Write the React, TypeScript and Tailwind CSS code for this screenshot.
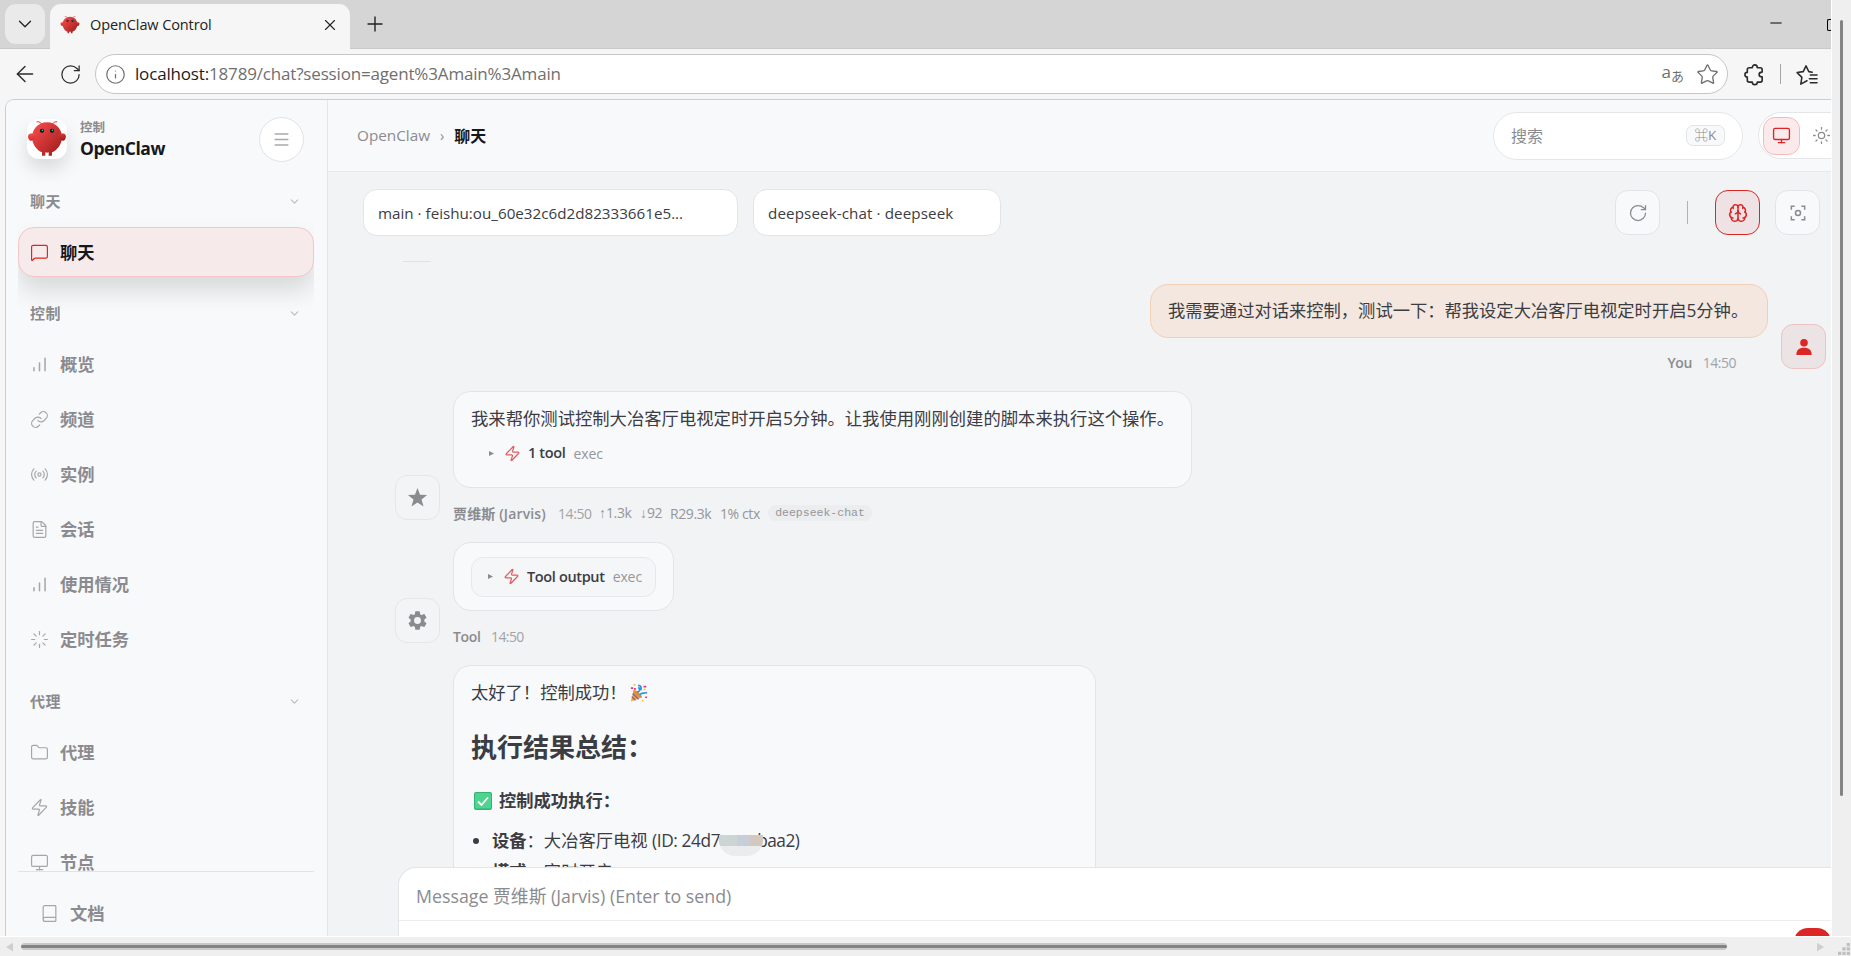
import React from 'react';
import {
  ArrowLeft,
  Book,
  Brain,
  ChevronDown,
  FileText,
  Folder,
  Info,
  Link,
  Loader,
  Menu,
  MessageSquare,
  Minus,
  Monitor,
  Plus,
  Radio,
  RotateCw,
  Star,
  Sun,
  X,
  Zap,
} from 'lucide-react';

type IconProps = { className?: string };

interface NavItem {
  label: string;
  icon: React.ReactNode;
  active?: boolean;
}

interface NavSection {
  title: string;
  className: string;
  items: NavItem[];
}

const BarsIcon: React.FC<IconProps> = ({ className }) => (
  <svg viewBox="0 0 24 24" fill="none" stroke="currentColor" strokeWidth="1.9" strokeLinecap="round" className={className}>
    <path d="M5 20v-4M12 20V10M19 20V4" />
  </svg>
);

const ico = 'size-[19px] stroke-[1.5]';

const sections: NavSection[] = [
  {
    title: '聊天',
    className: 'pt-0',
    items: [{ label: '聊天', icon: <MessageSquare className={ico} />, active: true }],
  },
  {
    title: '控制',
    className: 'pt-[23px]',
    items: [
      { label: '概览', icon: <BarsIcon className="size-[19px]" /> },
      { label: '频道', icon: <Link className={ico} /> },
      { label: '实例', icon: <Radio className={ico} /> },
      { label: '会话', icon: <FileText className={ico} /> },
      { label: '使用情况', icon: <BarsIcon className="size-[19px]" /> },
      { label: '定时任务', icon: <Loader className={ico} /> },
    ],
  },
  {
    title: '代理',
    className: 'pt-[24px]',
    items: [
      { label: '代理', icon: <Folder className={ico} /> },
      { label: '技能', icon: <Zap className={ico} /> },
      { label: '节点', icon: <Monitor className={ico} /> },
    ],
  },
];

const Lobster: React.FC<IconProps> = ({ className }) => (
  <svg viewBox="0 0 120 120" className={className}>
    <defs>
      <linearGradient id="shell" x1="0" y1="0" x2="1" y2="1">
        <stop offset="0" stopColor="#ff4d4d" />
        <stop offset="1" stopColor="#991b1b" />
      </linearGradient>
    </defs>
    <path d="M60 10C30 10 15 35 15 55s15 40 30 45v10h10v-10s5 2 10 0v10h10v-10c15-5 30-25 30-45S90 10 60 10Z" fill="url(#shell)" />
    <path d="M20 45C5 40 0 50 5 60s15 5 20-5c3-7 0-10-5-10ZM100 45c15-5 20 5 15 15s-15 5-20-5c-3-7 0-10 5-10Z" fill="url(#shell)" />
    <path d="M45 15Q35 5 30 8M75 15q10-10 15-7" stroke="#e5383b" strokeWidth="3" strokeLinecap="round" fill="none" />
    <circle cx="45" cy="35" r="6" fill="#050810" />
    <circle cx="75" cy="35" r="6" fill="#050810" />
    <circle cx="46" cy="34" r="2.5" fill="#00e5cc" />
    <circle cx="76" cy="34" r="2.5" fill="#00e5cc" />
  </svg>
);

const PuzzleIcon: React.FC<IconProps> = ({ className }) => (
  <svg viewBox="0 0 24 24" fill="none" stroke="currentColor" strokeWidth="1.7" strokeLinejoin="round" className={className}>
    <path d="M6.500 5h3.200c0-1.800 1-3 2.600-3s2.600 1.200 2.600 3H18c1.100 0 2 .9 2 2v2.500c-2 0-3.200 1-3.200 2.500s1.200 2.500 3.200 2.500V18c0 1.100-.9 2-2 2h-3.100c0 1.600-1 2.500-2.600 2.500S9.700 21.600 9.700 20H6.500c-1.100 0-2-.9-2-2v-3.400C2.900 14.600 2 13.600 2 12.200s.9-2.400 2.500-2.400V7c0-1.100.9-2 2-2Z" />
  </svg>
);

const TabStrip = () => (
  <div className="flex h-[49px] shrink-0 items-end border-b border-[#c9c9c9] bg-[#d5d5d5]">
    <div className="mb-[4px] ml-[5px] flex h-10 w-10 items-center justify-center rounded-[11px] bg-[#eaeaea]">
      <ChevronDown className="size-[22px] stroke-[1.4] text-[#222]" />
    </div>
    <div className="relative -mb-px ml-[5px] flex h-[45px] w-[300px] items-center rounded-t-[11px] bg-[#f6f6f6] pb-[4px] pl-[10px]">
      <Lobster className="size-5" />
      <span className="ml-[10px] text-[14.500px] tracking-[-0.1px] text-[#222]">OpenClaw Control</span>
      <X className="ml-auto mr-[11px] size-[18px] stroke-[1.5] text-[#222]" />
    </div>
    <Plus className="mb-[12px] ml-[13px] size-[24px] stroke-[1.4] text-[#222]" />
    <Minus className="mb-[16px] ml-auto size-[18px] stroke-[1.3] text-black" />
    <div className="mb-[17px] ml-[42px] h-[12px] w-[4px] rounded-l-[2px] border border-r-0 border-black" />
  </div>
);

const AddressBar = () => (
  <div className="flex h-[50px] shrink-0 items-center bg-[#f6f6f6] text-[#2b2b2b]">
    <ArrowLeft className="ml-[12px] size-[26px] stroke-[1.3]" />
    <RotateCw className="ml-[21px] size-[23px] stroke-[1.3]" />
    <div className="ml-[13px] flex h-10 w-[1633px] items-center rounded-full border border-[#c6c6c6] bg-white pl-[9px] pr-[8px]">
      <Info className="size-[21px] stroke-[1.4] text-[#707070]" />
      <span className="ml-[9px] text-[17px] tracking-[-0.17px] text-[#6f6f6f]">
        <span className="text-[#1b1b1b]">localhost:</span>18789/chat?session=agent%3Amain%3Amain
      </span>
      <span className="ml-auto flex text-[#6f6f6f]">
        <span className="text-[17px] leading-[18px]">a</span>
        <span className="mt-[4px] text-[13px] leading-[18px]">あ</span>
      </span>
      <Star className="ml-[12px] size-[23px] stroke-[1.4] text-[#707070]" />
    </div>
    <PuzzleIcon className="ml-[15px] size-[23px]" />
    <div className="ml-[14px] h-5 w-px bg-[#a5a5a5]" />
    <svg viewBox="0 0 24 24" fill="none" stroke="currentColor" strokeWidth="1.6" strokeLinecap="round" strokeLinejoin="round" className="ml-[14px] size-[23px]">
      <path d="M12.500 18.500 6 22l1.200-7L2.200 10l6.400-1L11.500 3l2.900 6 3.600.6M16 12.500h7M15 16.500h8M16 20.500h7" />
    </svg>
  </div>
);

const Sidebar = () => (
  <aside className="flex w-[322px] shrink-0 flex-col border-r border-[#e4e6e9] bg-[#f8f9fb] pl-[12px] pr-[13px]">
    <div className="flex h-[78px] shrink-0 items-center pl-[9px] pr-[10px]">
      <div className="flex size-10 items-center justify-center rounded-[12px] bg-white shadow-[0_10px_18px_rgba(0,0,0,0.12)]">
        <Lobster className="size-[40px]" />
      </div>
      <div className="ml-[13px] flex flex-col">
        <span className="text-[12.500px] font-bold leading-[18px] text-[#8b8b8f]">控制</span>
        <span className="text-[17.500px] font-bold leading-[22px] tracking-[-0.5px] text-[#17171c]">OpenClaw</span>
      </div>
      <div className="ml-auto flex size-[45px] items-center justify-center rounded-full border border-[#e2e3e6] bg-white">
        <Menu className="size-[19px] stroke-[1.8] text-[#a9a9ac]" />
      </div>
    </div>
    <nav className="min-h-0 flex-1 overflow-hidden pt-[10px]">
      {sections.map((section) => (
        <div key={section.title} className={section.className}>
          <div className="flex h-[27px] items-center justify-between pl-[12px] pr-[13px]">
            <span className="text-[15px] font-bold tracking-[0.4px] text-[#8b8b8f]">{section.title}</span>
            <ChevronDown className="size-[13px] stroke-[2] text-[#bcbcc0]" />
          </div>
          <div className="mt-[12px] flex flex-col gap-[5px]">
            {section.items.map((item) => (
              <div
                key={item.label}
                className={
                  item.active
                    ? 'flex h-[50px] items-center rounded-[16px] border border-[#f4c6c8] bg-[#f7eaeb] pl-[11px] text-[#dc2626] shadow-[0_14px_24px_rgba(0,0,0,0.13)]'
                    : 'flex h-[50px] items-center border border-transparent pl-[11px] text-[#a6a6a9]'
                }
              >
                {item.icon}
                <span className={item.active ? 'ml-[11px] pt-px text-[17.300px] font-bold text-[#17171c]' : 'ml-[11px] pt-px text-[17.300px] font-bold text-[#8b8b8f]'}>
                  {item.label}
                </span>
              </div>
            ))}
          </div>
        </div>
      ))}
    </nav>
    <div className="flex h-[65px] shrink-0 border-t border-[#e2e3e6] pl-[22px] pt-[28px]">
      <Book className="mt-[4px] size-[19px] shrink-0 stroke-[1.5] text-[#a6a6a9]" />
      <span className="ml-[11px] text-[17.300px] font-bold leading-[27px] text-[#8b8b8f]">文档</span>
    </div>
  </aside>
);

const TopBar = () => (
  <header className="flex h-[72px] shrink-0 items-center border-b border-[#e6e8eb] bg-[#f8f9fb] pl-[29px]">
    <span className="text-[15.300px] text-[#8b8b8f]">OpenClaw</span>
    <span className="ml-[10px] text-[14px] text-[#8b8b8f]">›</span>
    <span className="ml-[10px] text-[16px] font-bold text-[#17171c]">聊天</span>
    <div className="ml-auto flex h-[48px] w-[250px] items-center justify-between rounded-full border border-[#e4e6e9] bg-white pl-[17px] pr-[17px]">
      <span className="text-[16px] text-[#8b8b8f]">搜索</span>
      <span className="flex h-[21px] w-[39px] items-center justify-center rounded-[7px] border border-[#e2e4e8] bg-[#f8f9fb] text-[13.500px] text-[#8b8b8f]">⌘K</span>
    </div>
    <div className="ml-[15px] flex h-[47px] w-[73px] items-center rounded-l-full border border-r-0 border-[#e4e6e9] bg-white pl-[4px]">
      <div className="flex h-[38px] w-[37px] shrink-0 items-center justify-center rounded-[12px] border border-[#f6b9bb] bg-[#faeaeb]">
        <Monitor className="size-[19px] stroke-[1.700] text-[#dc2626]" />
      </div>
      <Sun className="ml-[12px] size-[19px] shrink-0 stroke-[1.600] text-[#8b8b8f]" />
    </div>
  </header>
);

const Toolbar = () => (
  <div className="flex h-[81px] shrink-0 items-center pl-[35px] pr-[11px]">
    <div className="flex h-[47px] w-[375px] items-center rounded-[14px] border border-[#e2e4e8] bg-white pl-[14px] pt-px text-[15.200px] text-[#3c3c43]">
      main · feishu:ou_60e32c6d2d82333661e5...
    </div>
    <div className="ml-[15px] flex h-[47px] w-[248px] items-center rounded-[14px] border border-[#e2e4e8] bg-white pl-[14px] pt-px text-[15.200px] tracking-[0.1px] text-[#3c3c43]">
      deepseek-chat · deepseek
    </div>
    <div className="ml-auto flex size-[45px] items-center justify-center rounded-[13px] border border-[#e2e4e8] bg-[#f8f9fb]">
      <RotateCw className="size-[20px] stroke-[1.500] text-[#8b8b8f]" />
    </div>
    <div className="ml-[27px] h-[23px] w-px bg-[#a4b8b8]" />
    <div className="ml-[27px] flex size-[45px] items-center justify-center rounded-[13px] border border-[#dc2626] bg-[#efe2e4]">
      <Brain className="size-[20px] stroke-[1.800] text-[#dc2626]" />
    </div>
    <div className="ml-[15px] flex size-[45px] items-center justify-center rounded-[13px] border border-[#e2e4e8] bg-[#f8f9fb]">
      <svg viewBox="0 0 24 24" fill="none" stroke="currentColor" strokeWidth="1.800" className="size-[20px] text-[#8b8b8f]">
        <path d="M4 8V4h4M16 4h4v4M20 16v4h-4M8 20H4v-4" />
        <circle cx="12" cy="12" r="3" />
      </svg>
    </div>
  </div>
);

const Avatar: React.FC<{ children: React.ReactNode }> = ({ children }) => (
  <div className="flex size-[45px] shrink-0 items-center justify-center rounded-[12px] border border-[#e4e6e9] bg-[#f3f4f6] text-[#8b8b8f]">
    {children}
  </div>
);

const Arrow: React.FC<{ children: React.ReactNode }> = ({ children }) => (
  <span className="mr-px inline-block w-[6px] font-['Liberation_Sans',sans-serif]">{children}</span>
);

const ToolLine: React.FC<{ label: string }> = ({ label }) => (
  <>
    <svg viewBox="0 0 6 6" className="size-[5px] fill-[#8b8b8f]">
      <path d="M0 0 6 3 0 6Z" />
    </svg>
    <Zap className="ml-[10px] size-[17px] stroke-[1.700] text-[#e25a5c]" />
    <span className="ml-[7px] text-[14.500px] font-semibold tracking-[-0.35px] text-[#3c3c43]">{label}</span>
    <span className="ml-[8px] text-[14px] tracking-[-0.1px] text-[#96969a]">exec</span>
  </>
);

const Messages = () => (
  <div className="relative min-h-0 flex-1 overflow-hidden text-[#3c3c43]">
    <div className="ml-[75px] mt-[8px] h-px w-[28px] bg-[#dfe1e4]" />

    <div className="mt-[22px] flex items-end justify-end pr-[5px]">
      <div className="flex flex-col items-end">
        <div className="flex h-[54px] w-[618px] items-center whitespace-nowrap rounded-[18px] border border-[#f4cfb5] bg-[#f3e7df] pl-[17px] text-[17.300px]">
          我需要通过对话来控制，测试一下：帮我设定大冶客厅电视定时开启5分钟。
        </div>
        <div className="mb-[2px] mt-[13px] flex h-[22px] items-center pr-[32px] text-[14px] text-[#a3a3a7]">
          <span className="font-semibold tracking-[-0.5px] text-[#8b8b8f]">You</span>
          <span className="ml-[11px] tracking-[-0.5px]">14:50</span>
        </div>
      </div>
      <div className="mb-[6px] ml-[13px] flex size-[45px] items-center justify-center rounded-[12px] border border-[#ecc3c5] bg-[#ece4e4]">
        <svg viewBox="0 0 16 16" className="size-[16px] fill-[#dc2626]">
          <circle cx="8" cy="3.800" r="3.800" />
          <path d="M0.300 16c0-5 2.700-7.300 7.700-7.300s7.700 2.300 7.700 7.300Z" />
        </svg>
      </div>
    </div>

    <div className="mt-[16px] flex items-end pl-[67px]">
      <div className="mb-[5px]">
        <Avatar>
          <svg viewBox="0 0 24 24" className="size-[21px] fill-current">
            <path d="M12 1l2.900 7.900 8.100.3-6.400 5 2.300 8L12 17.600 5.100 22.200l2.300-8L1 9.200l8.100-.3Z" />
          </svg>
        </Avatar>
      </div>
      <div className="ml-[13px]">
        <div className="h-[97px] w-[739px] rounded-[18px] border border-[#e2e4e8] bg-[#f8f9fb] pl-[17px] pt-[13px]">
          <p className="whitespace-nowrap text-[17.330px] leading-[27px]">我来帮你测试控制大冶客厅电视定时开启5分钟。让我使用刚刚创建的脚本来执行这个操作。</p>
          <div className="mt-[10px] flex h-[22px] items-center pl-[18px]">
            <ToolLine label="1 tool" />
          </div>
        </div>
        <div className="mt-[13px] flex h-[24px] items-center whitespace-nowrap text-[14px] tracking-[-0.4px] text-[#96969a]">
          <span className="w-[105px] font-semibold tracking-[0.15px] text-[#8b8b8f]">贾维斯 (Jarvis)</span>
          <span className="w-[41px] text-[#a3a3a7]">14:50</span>
          <span className="w-[41px]"><Arrow>↑</Arrow>1.3k</span>
          <span className="w-[30px]"><Arrow>↓</Arrow>92</span>
          <span className="w-[50px]">R29.3k</span>
          <span className="w-[48px]">1% ctx</span>
          <span className="flex h-[16px] w-[104px] items-center justify-center rounded-full bg-[#ebedef] font-['Liberation_Mono',monospace] text-[11.500px] tracking-normal">deepseek-chat</span>
        </div>
      </div>
    </div>

    <div className="mt-[17px] flex items-end pl-[67px]">
      <div className="mb-[5px]">
        <Avatar>
          <svg viewBox="0 0 24 24" className="size-[23px] fill-current">
            <path d="M19.140 12.940c.040-.300.060-.610.060-.940s-.020-.640-.070-.940l2.030-1.580a.49.49 0 0 0 .120-.610l-1.920-3.320a.49.49 0 0 0-.590-.220l-2.390.960a7 7 0 0 0-1.620-.940l-.360-2.540a.48.48 0 0 0-.480-.410h-3.840a.48.48 0 0 0-.470.410l-.360 2.540c-.590.240-1.130.570-1.620.940l-2.390-.960a.49.49 0 0 0-.590.220L2.740 8.870a.48.48 0 0 0 .120.610l2.030 1.580c-.050.300-.090.630-.090.940s.020.640.070.940l-2.030 1.580a.49.49 0 0 0-.120.610l1.920 3.320c.120.220.370.290.590.220l2.390-.960c.500.380 1.030.700 1.620.940l.360 2.540c.050.240.240.410.480.410h3.840c.240 0 .440-.170.470-.410l.360-2.540a7 7 0 0 0 1.620-.940l2.390.960c.220.080.470 0 .590-.220l1.920-3.320a.49.49 0 0 0-.120-.610ZM12 15.600a3.600 3.600 0 1 1 0-7.200 3.600 3.600 0 0 1 0 7.200Z" />
          </svg>
        </Avatar>
      </div>
      <div className="ml-[13px]">
        <div className="flex h-[69px] w-[221px] items-center justify-center rounded-[18px] border border-[#e2e4e8] bg-[#f8f9fb]">
          <div className="flex h-[40px] w-[185px] items-center rounded-[12px] border border-[#e6e8eb] bg-[#f5f6f8] pl-[16px]">
            <ToolLine label="Tool output" />
          </div>
        </div>
        <div className="mt-[13px] flex h-[24px] items-center text-[14px] text-[#a3a3a7]">
          <span className="w-[38px] font-semibold tracking-[-0.3px] text-[#8b8b8f]">Tool</span>
          <span className="tracking-[-0.6px]">14:50</span>
        </div>
      </div>
    </div>

    <div className="ml-[125px] mt-[17px] h-[260px] w-[643px] rounded-[18px] border border-[#e2e4e8] bg-[#f8f9fb] pl-[17px] pt-[13px]">
      <p className="flex items-center text-[17.300px] leading-[27px]">
        太好了！控制成功！
        <svg viewBox="0 0 20 20" className="ml-[3px] size-[18px]">
          <path d="M4 7 1 19.500 13 15Z" fill="#f5a623" />
          <path d="M3 10.500 9.500 17M2 14l4 4.200" stroke="#7c5ccf" strokeWidth="1.500" />
          <ellipse cx="8.500" cy="11" rx="2" ry="6" transform="rotate(-48 8.500 11)" fill="#e0912a" />
          <path d="M8 9c3.500-1 4-4 1-5M9 1.500c3 0 4 2 3 5.500M11 12c2-3 4-1 8-2.500" stroke="#2f8fe8" strokeWidth="1.900" fill="none" />
          <path d="M1 4.500h2.500M15 3h3M17 14.500l2 .5M5.500 4.500v2" stroke="#e8308a" strokeWidth="2" />
          <path d="M4 1h2M15 6.500l2-1M13 18.500h2" stroke="#f7c531" strokeWidth="1.800" />
        </svg>
      </p>
      <h2 className="mt-[22px] text-[26px] font-bold leading-[38px]">执行结果总结：</h2>
      <p className="mt-[21px] flex items-center text-[17.300px] font-bold leading-[27px]">
        <svg viewBox="0 0 18 18" className="ml-[3px] mr-[7px] size-[18px]">
          <rect width="18" height="18" rx="2" fill="#2fb574" />
          <rect x="1" y="1" width="16" height="15.500" rx="1.500" fill="#4fd48f" />
          <path d="M4 9.500 7.500 13 14 5.500" stroke="#fff" strokeWidth="1.800" fill="none" />
        </svg>
        控制成功执行：
      </p>
      <ul className="mt-[13px] list-disc pl-[21px] text-[17.300px] leading-[27px]">
        <li>
          <b>设备</b>：大冶客厅电视 <span className="tracking-[-0.4px]">(ID: 24d7</span>
          <span className="relative inline-block w-[37px]">
            <span className="absolute -bottom-[9px] -left-px z-10 flex h-[21px] w-[44px] overflow-hidden rounded-b-[16px] bg-[#ebecee]">
              <span className="h-[11px] w-[18px] bg-[#cdd4d4]" />
              <span className="h-[11px] w-[13px] bg-[#c6ced9]" />
              <span className="h-[11px] w-[13px] bg-[#d3c8c0]" />
            </span>
          </span>
          <span className="tracking-[-0.5px]">baa2)</span>
        </li>
        <li className="mt-[4px]">
          <b>模式</b>：定时开启
        </li>
      </ul>
    </div>
  </div>
);

const Composer = () => (
  <div className="ml-[70px] h-[69px] shrink-0 overflow-hidden rounded-tl-[18px] border-l border-t border-[#e2e4e8] bg-white">
    <div className="flex h-[53px] items-center border-b border-[#ebedef] pl-[17px] pt-[5px] text-[17.800px] text-[#8b8b8f]">
      Message 贾维斯 (Jarvis) (Enter to send)
    </div>
    <div className="ml-auto mt-[7px] h-[40px] w-[37px] rounded-[14px] bg-[#dc2626]" />
  </div>
);

const BottomScrollbar = () => (
  <div className="flex h-[20px] shrink-0 items-center border-t border-white bg-[#efefef]">
    <svg viewBox="0 0 8 10" className="ml-[6px] h-[10px] w-[7px] fill-[#cfcfcf]">
      <path d="M8 0v10L0 5Z" />
    </svg>
    <div className="ml-[8px] flex h-[7px] w-[1706px] items-center rounded-full bg-[#c8c8c8]">
      <div className="h-[3px] w-full rounded-full bg-[#838383]" />
    </div>
    <svg viewBox="0 0 8 10" className="ml-[90px] h-[10px] w-[7px] fill-[#cfcfcf]">
      <path d="M0 0v10l8-5Z" />
    </svg>
    <svg viewBox="0 0 12 12" className="ml-auto mt-[6px] size-[13px] fill-[#c0c0c0]">
      <path d="M8 0h3v3H8zM4 4h3v3H4zM8 4h3v3H8zM0 8h3v3H0zM4 8h3v3H4zM8 8h3v3H8z" />
    </svg>
  </div>
);

const App: React.FC = () => {
  return (
    <div className="flex h-[956px] w-[1851px] flex-col overflow-hidden bg-[#f6f6f6] font-['Open_Sans','Noto_Sans_CJK_SC',sans-serif]">
      <div className="flex min-h-0 flex-1">
        <div className="flex w-[1831px] shrink-0 flex-col">
          <TabStrip />
          <AddressBar />
          <div className="ml-[5px] flex min-h-0 flex-1 overflow-hidden rounded-tl-[9px] border-l border-t border-[#cdcdcd] bg-[#f1f3f5]">
            <Sidebar />
            <div className="flex min-w-0 flex-1 flex-col">
              <TopBar />
              <Toolbar />
              <Messages />
              <Composer />
            </div>
          </div>
        </div>
        <div className="flex flex-1 border-l border-white bg-[#efefef] pl-[8px] pt-[20px]">
          <div className="h-[776px] w-[3px] rounded-full bg-[#838383]" />
        </div>
      </div>
      <BottomScrollbar />
    </div>
  );
};

export default App;
